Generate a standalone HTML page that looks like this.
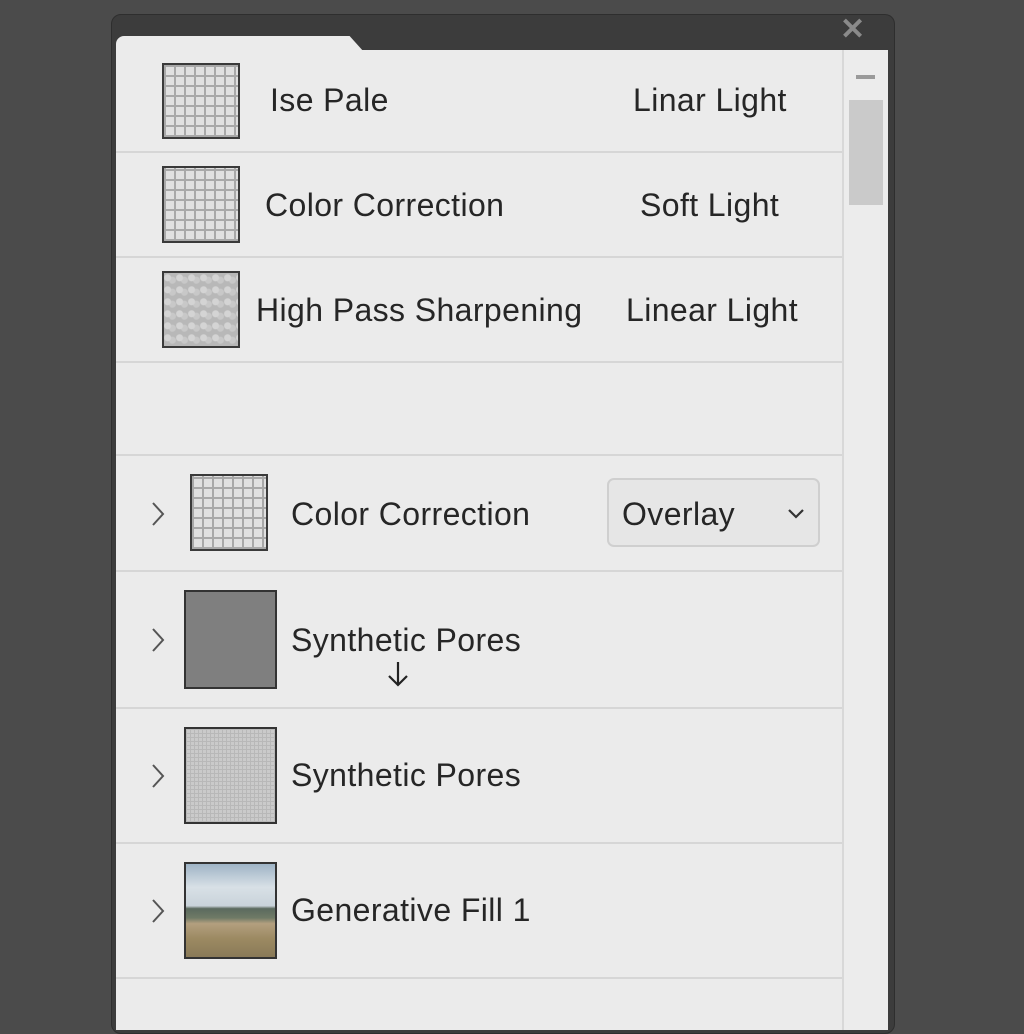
<!DOCTYPE html>
<html><head><meta charset="utf-8"><style>
*{margin:0;padding:0;box-sizing:border-box}
body{width:1024px;height:1024px;background:#4b4b4b;position:relative;overflow:hidden;font-family:"Liberation Sans",sans-serif;color:#262626}
.a{position:absolute}
.frame{left:111px;top:14px;width:784px;height:1020px;background:#3c3c3c;border-radius:10px;border:1px solid #2e2e2e}
.content{left:116px;top:50px;width:726px;height:980px;background:#ebebeb}
.tab{left:116px;top:36px;width:236px;height:20px;background:#ebebeb;border-radius:8px 8px 0 0}
.tabslope{left:340px;top:36px;width:24px;height:16px;background:#ebebeb;clip-path:polygon(0 0,40% 0,100% 100%,0 100%)}
.sb{left:842px;top:50px;width:46px;height:980px;background:#ececec;border-left:2px solid #d8d8d8}
.thumb{left:849px;top:100px;width:34px;height:105px;background:#cacaca}
.sep{left:116px;width:726px;height:2px;background:#d6d6d6}
.t{font-size:32px;line-height:36px;white-space:nowrap;letter-spacing:0.4px}
.grid{border:2px solid #3a3a3a;background-color:#c4c4c4;
background-image:repeating-linear-gradient(90deg,#a8a8a8 0 2px,transparent 2px 10px),
repeating-linear-gradient(0deg,#a8a8a8 0 2px,#e0e0e0 2px 10px)}
</style></head><body>
<div class="a frame"></div>
<div class="a" style="left:840px;top:12px;font-size:30px;color:#8a8a8a;font-weight:bold">✕</div>
<div class="a content"></div>
<div class="a tab"></div>
<div class="a tabslope"></div>
<div class="a sb"></div>
<div class="a" style="left:856px;top:75px;width:19px;height:4px;background:#9a9a9a"></div>
<div class="a thumb"></div>

<div class="a sep" style="top:151px"></div>
<div class="a sep" style="top:256px"></div>
<div class="a sep" style="top:361px"></div>
<div class="a sep" style="top:454px"></div>
<div class="a sep" style="top:570px"></div>
<div class="a sep" style="top:707px"></div>
<div class="a sep" style="top:842px"></div>
<div class="a sep" style="top:977px"></div>

<div class="a grid" style="left:162px;top:63px;width:78px;height:76px"></div>
<div class="a t" style="left:270px;top:82px">Ise Pale</div>
<div class="a t" style="left:633px;top:82px">Linar Light</div>

<div class="a grid" style="left:162px;top:166px;width:78px;height:77px;background-color:#d4d4d4"></div>
<div class="a t" style="left:265px;top:187px">Color Correction</div>
<div class="a t" style="left:640px;top:187px">Soft Light</div>

<div class="a" style="left:162px;top:271px;width:78px;height:77px;border:2px solid #3a3a3a;background:#b8b8b8;background-image:radial-gradient(circle at 30% 40%,#d4d4d4 0 3px,transparent 4px),radial-gradient(circle at 70% 60%,#c8c8c8 0 3px,transparent 4px);background-size:12px 12px"></div>
<div class="a t" style="left:256px;top:292px">High Pass Sharpening</div>
<div class="a t" style="left:626px;top:292px">Linear Light</div>

<svg class="a" style="left:150px;top:500px" width="16" height="28"><path d="M3 3 L13 14 L3 25" fill="none" stroke="#555" stroke-width="2"/></svg>
<div class="a grid" style="left:190px;top:474px;width:78px;height:77px"></div>
<div class="a t" style="left:291px;top:496px">Color Correction</div>
<div class="a" style="left:607px;top:478px;width:213px;height:69px;border:2px solid #cfcfcf;border-radius:7px;background:#e6e6e6"></div>
<div class="a t" style="left:622px;top:496px">Overlay</div>
<svg class="a" style="left:786px;top:507px" width="20" height="14"><path d="M3 3 L10 10 L17 3" fill="none" stroke="#333" stroke-width="2.2"/></svg>

<svg class="a" style="left:150px;top:626px" width="16" height="28"><path d="M3 3 L13 14 L3 25" fill="none" stroke="#555" stroke-width="2"/></svg>
<div class="a" style="left:184px;top:590px;width:93px;height:99px;border:2px solid #333;background:#7f7f7f"></div>
<div class="a t" style="left:291px;top:622px">Synthetic Pores</div>
<svg class="a" style="left:387px;top:660px" width="22" height="28"><path d="M11 2 V25 M2 16 L11 25 L20 16" fill="none" stroke="#222" stroke-width="2.2"/></svg>

<svg class="a" style="left:150px;top:762px" width="16" height="28"><path d="M3 3 L13 14 L3 25" fill="none" stroke="#555" stroke-width="2"/></svg>
<div class="a" style="left:184px;top:727px;width:93px;height:97px;border:2px solid #333;background:#cacaca;background-image:repeating-linear-gradient(90deg,#b8b8b8 0 1px,transparent 1px 4px),repeating-linear-gradient(0deg,#b8b8b8 0 1px,transparent 1px 4px)"></div>
<div class="a t" style="left:291px;top:757px">Synthetic Pores</div>

<svg class="a" style="left:150px;top:897px" width="16" height="28"><path d="M3 3 L13 14 L3 25" fill="none" stroke="#555" stroke-width="2"/></svg>
<div class="a" style="left:184px;top:862px;width:93px;height:97px;border:2px solid #333;background:linear-gradient(180deg,#9fb4c6 0%,#d8e0e6 25%,#c9d3da 45%,#5b6a5e 48%,#6f7a66 58%,#b39f7f 64%,#9c8a62 80%,#8a7a58 100%)"></div>
<div class="a t" style="left:291px;top:892px">Generative Fill 1</div>
</body></html>
